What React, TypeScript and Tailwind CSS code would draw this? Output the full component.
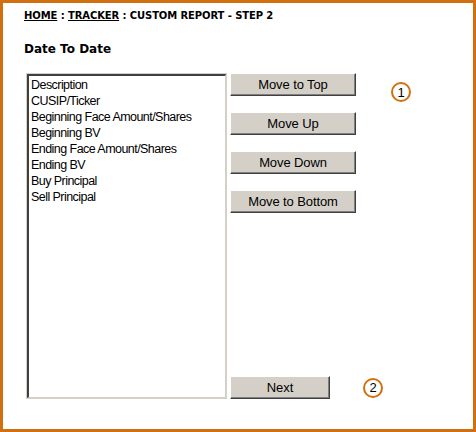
export default function App() {
  const fields = [
    "Description",
    "CUSIP/Ticker",
    "Beginning Face Amount/Shares",
    "Beginning BV",
    "Ending Face Amount/Shares",
    "Ending BV",
    "Buy Principal",
    "Sell Principal",
  ];

  const btn =
    "h-[23px] bg-[#d4d0c8] border-t border-l border-t-[#ffffff] border-l-[#ffffff] border-r border-b border-r-[#404040] border-b-[#404040] shadow-[inset_-1px_-1px_0_#808080] text-[13px] leading-none text-black font-['Liberation_Sans',Arial,sans-serif] tracking-[-0.1px]";

  return (
    <div className="w-[476px] h-[432px] border-[3px] border-[#d2700f] bg-white pl-[21px] pt-[7px] font-['DejaVu_Sans',Verdana,sans-serif]">
      {/* Breadcrumb */}
      <p className="text-[10px] leading-[12px] font-bold text-black tracking-[-0.1px]">
        <span className="underline">HOME</span> : <span className="underline">TRACKER</span> : CUSTOM REPORT - STEP 2
      </p>

      <h2 className="mt-[20px] text-[12px] leading-[14px] font-bold text-black">Date To Date</h2>

      <div className="mt-[17px] flex">
        {/* Field list */}
        <div className="ml-[2px] w-[201px] h-[326px] border border-t-[#d4d0c8] border-l-[#d4d0c8] border-r-[#d4d0c8] border-b-[#d4d0c8] bg-white">
          <div className="h-full border-t-2 border-l-2 border-t-[#404040] border-l-[#404040] border-r border-b border-r-[#d4d0c8] border-b-[#d4d0c8] pl-[2px] pt-[1px] font-['Liberation_Sans',Arial,sans-serif] text-[12.5px] leading-[16px] tracking-[-0.55px] text-black">
            {fields.map((f) => (
              <div key={f}>{f}</div>
            ))}
          </div>
        </div>

        {/* Buttons */}
        <div className="ml-[3px] h-[326px] flex flex-col justify-between">
          <div className="flex flex-col gap-[16px]">
            <button className={`${btn} w-[126px]`}>Move to Top</button>
            <button className={`${btn} w-[126px]`}>Move Up</button>
            <button className={`${btn} w-[126px]`}>Move Down</button>
            <button className={`${btn} w-[126px]`}>Move to Bottom</button>
          </div>
          <div className="flex items-center">
            <button className={`${btn} w-[100px]`}>Next</button>
            <span className="ml-[33px] w-[20px] h-[20px] rounded-full border-[2px] border-[#d2700f] flex items-center justify-center text-[13px] leading-none text-black font-['Liberation_Sans',Arial,sans-serif]">
              2
            </span>
          </div>
        </div>

        {/* Step marker */}
        <div className="ml-[8px] mt-[9px]">
          <span className="w-[20px] h-[20px] rounded-full border-[2px] border-[#d2700f] flex items-center justify-center text-[13px] leading-none text-black font-['Liberation_Sans',Arial,sans-serif]">
            1
          </span>
        </div>
      </div>
    </div>
  );
}
